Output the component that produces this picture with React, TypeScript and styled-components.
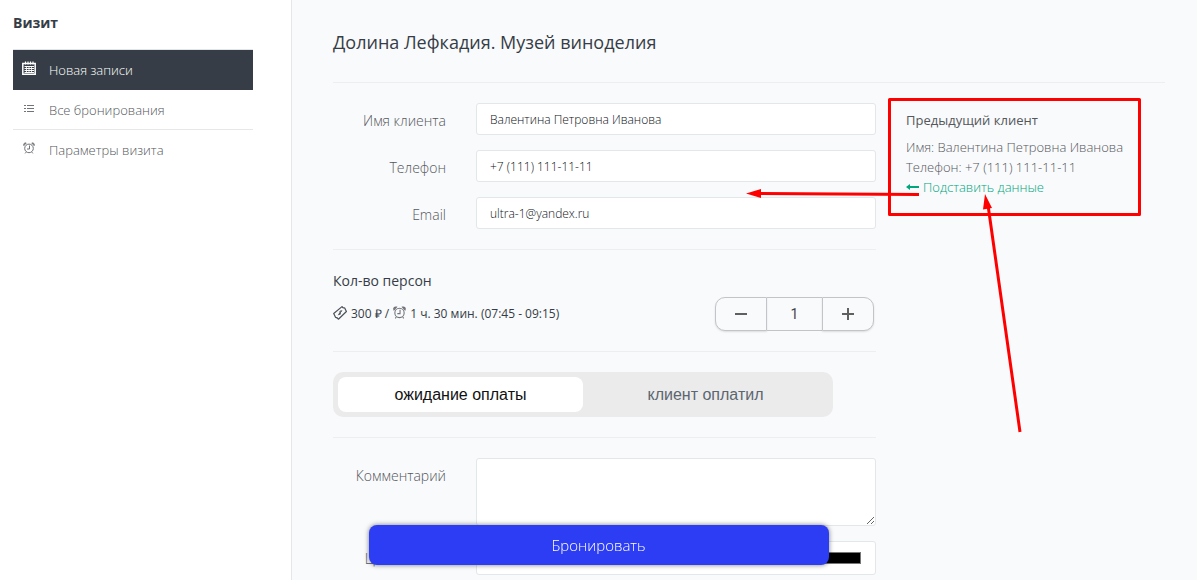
import React, { useState } from "react";
import styled, { createGlobalStyle, css } from "styled-components";

const GlobalStyle = createGlobalStyle`
  *, *::before, *::after { box-sizing: border-box; }
  html { height: 100%; }
  body {
    margin: 0;
    height: 100%;
    overflow: hidden;
    background: #f9fafc;
    color: #363d46;
    font-family: "Open Sans", sans-serif;
    font-size: 14px;
    font-weight: 300;
    line-height: 20px;
  }
  #root { height: 100%; }
  h1, h2, h3, p, ul { margin: 0; padding: 0; }
`;

const Page = styled.div`
  display: flex;
  min-height: 100%;
`;

const Sidebar = styled.aside`
  flex: 0 0 292px;
  padding: 13px 38px 0 13px;
  background: #fff;
  border-right: 1px solid #e4e6e9;
`;

const SidebarTitle = styled.h2`
  font-size: 14px;
  font-weight: 700;
  line-height: 20px;
`;

const Menu = styled.ul`
  margin-top: 16px;
  list-style: none;
  border-top: 1px solid #e2e5e7;
`;

const MenuItem = styled.li`
  height: 40px;
  border-bottom: 1px solid #e6e7e9;
  &:first-child, &:last-child { border-bottom: 0; }
`;

const MenuLink = styled.a<{ $active?: boolean }>`
  display: flex;
  align-items: center;
  gap: 12px;
  height: 40px;
  padding: 0 8px;
  color: #54575b;
  font-size: 13px;
  text-decoration: none;
  ${(p) => p.$active && css`
    background: #363d46;
    color: #fff;
  `}
`;

const MenuIcon = styled.span`
  display: flex;
  flex: none;
  justify-content: center;
  width: 16px;
  margin-bottom: 4px;
`;

const Main = styled.main`
  flex: 1;
  min-width: 0;
  padding: 30px 32px 0 41px;
`;

const Title = styled.h1`
  padding-bottom: 27px;
  border-bottom: 1px solid #eceef0;
  font-size: 18px;
  font-weight: 400;
  line-height: 25px;
`;

const Columns = styled.div`
  display: grid;
  grid-template-columns: minmax(0, 543px) minmax(0, 1fr);
  gap: 30px;
`;

const Section = styled.section`
  padding: 20px 0;
  border-bottom: 1px solid #eceef0;
  &:last-child { border-bottom: 0; }
`;

const Field = styled.div`
  display: grid;
  grid-template-columns: 113px minmax(0, 1fr);
  gap: 30px;
  & + & { margin-top: 15px; }
`;

const FieldLabel = styled.label`
  padding-top: 8px;
  color: #54575b;
  text-align: right;
`;

const controlStyle = css`
  display: block;
  width: 100%;
  border: 1px solid #e2e7ea;
  border-radius: 3px;
  background: #fff;
  color: #0e1218;
  font: 300 12px/18px "Open Sans", sans-serif;
`;

const TextInput = styled.input`
  ${controlStyle}
  height: 32px;
  padding: 0 13px;
`;

const TextArea = styled.textarea`
  ${controlStyle}
  height: 68px;
  padding: 8px 13px;
  resize: vertical;
`;

const ColorInput = styled.input`
  ${controlStyle}
  height: 34px;
  padding: 6px 12px;
`;

const PersonsTitle = styled.h3`
  font-size: 14px;
  font-weight: 400;
  line-height: 22px;
`;

const PersonsRow = styled.div`
  display: flex;
  align-items: center;
  justify-content: space-between;
  padding-right: 2px;
  margin-top: 5px;
`;

const Price = styled.p`
  display: flex;
  align-items: center;
  gap: 4px;
  font-size: 12px;
  font-weight: 400;
  svg { margin-bottom: 3px; }
`;

const Stepper = styled.div`
  display: flex;
  height: 34px;
`;

const StepButton = styled.button<{ $side: "left" | "right" }>`
  display: flex;
  align-items: center;
  justify-content: center;
  width: 52px;
  padding: 0;
  border: 1px solid #c2c4c7;
  border-radius: ${(p) => (p.$side === "left" ? "10px 0 0 10px" : "0 10px 10px 0")};
  background: #f9fafc;
  box-shadow: 0 1px 2px rgba(0, 0, 0, 0.12);
`;

const StepValue = styled.input`
  width: 55px;
  padding: 0;
  border: solid #c2c4c7;
  border-width: 1px 0;
  border-radius: 0;
  background: transparent;
  color: #444;
  font: 400 14px/20px Roboto, sans-serif;
  text-align: center;
`;

const Segmented = styled.fieldset`
  display: flex;
  width: 500px;
  max-width: 100%;
  height: 45px;
  margin: 0;
  padding: 5px;
  border: 0;
  border-radius: 10px;
  background: #ebebeb;
`;

const Segment = styled.label<{ $checked: boolean }>`
  flex: 1;
  border-radius: 8px;
  background: ${(p) => (p.$checked ? "#fff" : "transparent")};
  color: ${(p) => (p.$checked ? "#111" : "#5c6670")};
  font: 400 16px/35px "Liberation Sans", Arial, sans-serif;
  text-align: center;
  cursor: pointer;
`;

const HiddenRadio = styled.input`
  position: absolute;
  opacity: 0;
  pointer-events: none;
`;

const Previous = styled.aside`
  position: relative;
  padding-top: 27px;
  color: #54575b;
  font-size: 13px;
  white-space: nowrap;
`;

const PreviousTitle = styled.h3`
  margin-bottom: 7px;
  font-size: 13px;
  font-weight: 400;
  line-height: 20px;
`;

const FillLink = styled.a`
  display: flex;
  align-items: center;
  gap: 4px;
  color: #00a67c;
  text-decoration: none;
`;

const Annotations = styled.svg`
  position: absolute;
  top: 7px;
  left: -166px;
  pointer-events: none;
`;

const SubmitButton = styled.button`
  position: fixed;
  bottom: 15px;
  left: 0;
  right: 0;
  width: 460px;
  max-width: 100%;
  height: 40px;
  margin: 0 auto;
  border: 0;
  border-radius: 8px;
  background: #2d3df3;
  box-shadow: 0 0 5px rgba(0, 0, 0, 0.5);
  color: #fff;
  font: 300 15px/20px "Open Sans", sans-serif;
`;

const CalendarIcon = () => (
  <svg width="16" height="16" viewBox="0 0 16 16" fill="none" stroke="currentColor">
    <path d="M1.8 3.500h12.400v10.700H1.800z" strokeWidth="1.500" />
    <path d="M4.500 1.500v3M7 1.500v3M9.500 1.500v3M12 1.500v3" strokeWidth="1.200" />
    <path d="M3.500 6.500h9.500M3.500 8.500h9.500M3.500 10.500h9.500M3.500 12.500h9.500" strokeWidth="1" />
    <path d="M5.500 6v7M8 6v7M10.500 6v7" strokeWidth=".8" />
  </svg>
);

const ListIcon = () => (
  <svg width="16" height="16" viewBox="0 0 16 16" fill="#707377">
    <path d="M3 5h2v1H3zM6 5h7v1H6zM3 8h2v1H3zM6 8h7v1H6zM3 11h2v1H3zM6 11h7v1H6z" />
  </svg>
);

const AlarmIcon = ({ size }: { size: number }) => (
  <svg width={size} height={size} viewBox="0 0 12 12" fill="none" stroke="#707377">
    <circle cx="6" cy="6.4" r="4.300" />
    <path d="M6.500 3.500v3.500H4M3 10.200l-.9 1.200M9 10.200l.9 1.200" />
    <path d="M.9 3.600C.2 1.900 1.400.6 3.200 1zM11.100 3.600c.7-1.700-.5-3-2.300-2.600z" fill="#a5a7aa" />
  </svg>
);

const MoneyIcon = () => (
  <svg width="14" height="14" viewBox="0 0 14 14" fill="none" stroke="#4c5157">
    <path d="M.7 7.500 9 .6q1 1.800 2.700 1.300l1.700 3.600-8 7.700q-1-1.900-2.900-1.900z" strokeWidth="1.200" strokeLinejoin="round" />
    <path d="M8.600 5.300c-1-1-2.500.2-1.500 1.400s0 2.500-1.500 1.400M8.900 4.300 5.300 9.200" />
  </svg>
);

const ArrowLeftIcon = () => (
  <svg width="13" height="8" viewBox="0 0 13 8" fill="currentColor">
    <path d="M0 4 4 1v2h9v2H4v2z" />
  </svg>
);

export default function App() {
  const [count, setCount] = useState(1);
  const [status, setStatus] = useState("waiting");

  return (
    <>
      <GlobalStyle />
      <Page>
        <Sidebar>
          <SidebarTitle>Визит</SidebarTitle>
          <nav>
            <Menu>
              <MenuItem>
                <MenuLink href="#new" $active><MenuIcon><CalendarIcon /></MenuIcon>Новая записи</MenuLink>
              </MenuItem>
              <MenuItem>
                <MenuLink href="#all"><MenuIcon><ListIcon /></MenuIcon>Все бронирования</MenuLink>
              </MenuItem>
              <MenuItem>
                <MenuLink href="#settings"><MenuIcon><AlarmIcon size={12} /></MenuIcon>Параметры визита</MenuLink>
              </MenuItem>
            </Menu>
          </nav>
        </Sidebar>
        <Main>
          <Title>Долина Лефкадия. Музей виноделия</Title>
          <Columns>
            <form onSubmit={(e) => e.preventDefault()}>
              <Section>
                <Field>
                  <FieldLabel htmlFor="name">Имя клиента</FieldLabel>
                  <TextInput id="name" defaultValue="Валентина Петровна Иванова" />
                </Field>
                <Field>
                  <FieldLabel htmlFor="phone">Телефон</FieldLabel>
                  <TextInput id="phone" type="tel" defaultValue="+7 (111) 111-11-11" />
                </Field>
                <Field>
                  <FieldLabel htmlFor="email">Email</FieldLabel>
                  <TextInput id="email" type="email" defaultValue="ultra-1@yandex.ru" />
                </Field>
              </Section>
              <Section>
                <PersonsTitle>Кол-во персон</PersonsTitle>
                <PersonsRow>
                  <Price>
                    <MoneyIcon /> 300 ₽ / <AlarmIcon size={13} /> 1 ч. 30 мин. (07:45 - 09:15)
                  </Price>
                  <Stepper>
                    <StepButton type="button" $side="left" aria-label="Меньше" onClick={() => setCount(Math.max(1, count - 1))}>
                      <svg width="12" height="12" viewBox="0 0 12 12" stroke="#606060" strokeWidth="2"><path d="M0 6h12" /></svg>
                    </StepButton>
                    <StepValue aria-label="Кол-во персон" value={count} readOnly />
                    <StepButton type="button" $side="right" aria-label="Больше" onClick={() => setCount(count + 1)}>
                      <svg width="12" height="12" viewBox="0 0 12 12" stroke="#606060" strokeWidth="2"><path d="M0 6h12M6 0v12" /></svg>
                    </StepButton>
                  </Stepper>
                </PersonsRow>
              </Section>
              <Section>
                <Segmented aria-label="Статус оплаты">
                  <Segment $checked={status === "waiting"}>
                    <HiddenRadio type="radio" name="status" checked={status === "waiting"} onChange={() => setStatus("waiting")} />
                    ожидание оплаты
                  </Segment>
                  <Segment $checked={status === "paid"}>
                    <HiddenRadio type="radio" name="status" checked={status === "paid"} onChange={() => setStatus("paid")} />
                    клиент оплатил
                  </Segment>
                </Segmented>
              </Section>
              <Section>
                <Field>
                  <FieldLabel htmlFor="comment">Комментарий</FieldLabel>
                  <TextArea id="comment" />
                </Field>
                <Field>
                  <FieldLabel htmlFor="color">Цвет записи</FieldLabel>
                  <ColorInput id="color" type="color" defaultValue="#000000" />
                </Field>
              </Section>
              <SubmitButton type="submit">Бронировать</SubmitButton>
            </form>
            <Previous>
              <PreviousTitle>Предыдущий клиент</PreviousTitle>
              <p>Имя: Валентина Петровна Иванова</p>
              <p>Телефон: +7 (111) 111-11-11</p>
              <FillLink href="#fill"><ArrowLeftIcon />Подставить данные</FillLink>
              <Annotations width="410" height="350" viewBox="740 90 410 350" fill="none" stroke="#f00" strokeWidth="3" aria-hidden="true">
                <rect x="889.5" y="99.5" width="250" height="115" strokeLinejoin="round" />
                <path d="M919 194.500 760 193.500M1020 432 988 205" />
                <path d="M746 193.500 761 189v9zM985 194l-2 15.500 9-1.500z" fill="#f00" stroke="none" />
              </Annotations>
            </Previous>
          </Columns>
        </Main>
      </Page>
    </>
  );
}
